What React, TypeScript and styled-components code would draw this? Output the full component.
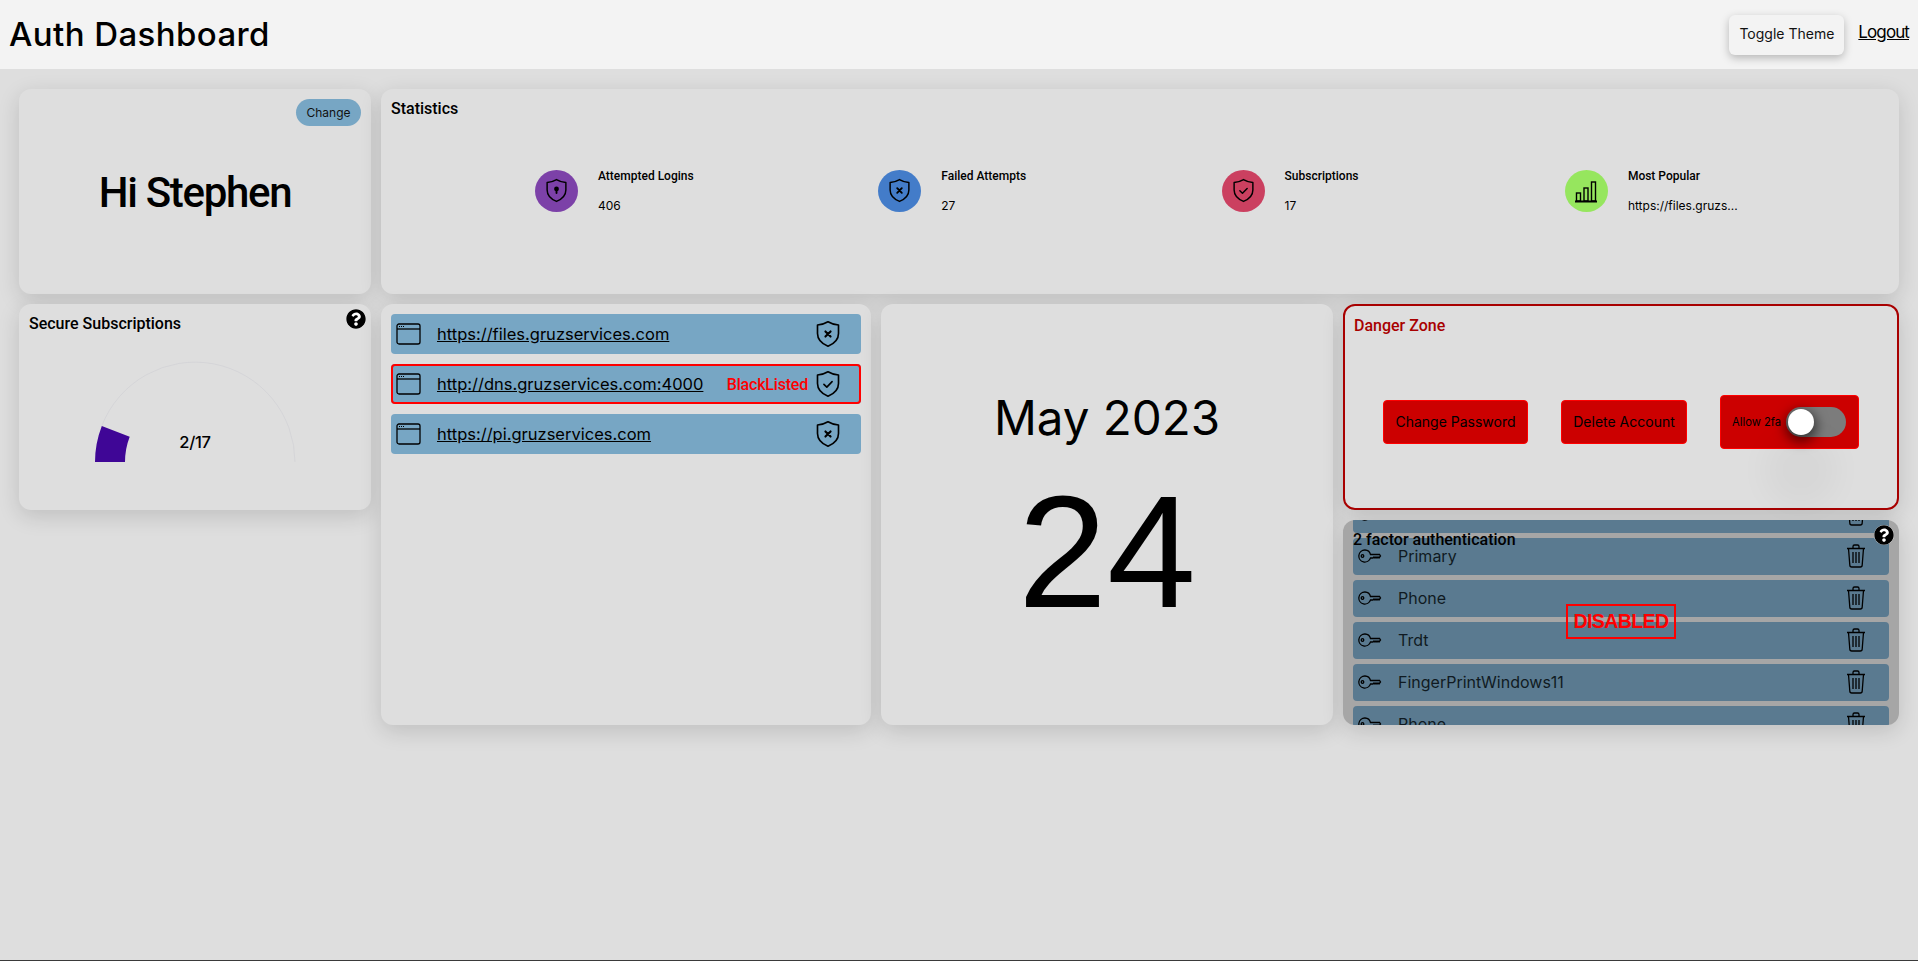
import React from "react";
import styled, { createGlobalStyle } from "styled-components";
import { FaQuestionCircle } from "react-icons/fa";

const Global = createGlobalStyle`
  html, body { margin: 0; padding: 0; background: #dedede; }
  body { font-family: "Inter", "Liberation Sans", sans-serif; color: #000; overflow: hidden; }
  #root { height: 961px; }
  * { box-sizing: border-box; }
`;

const Page = styled.div`
  width: 1918px;
  height: 961px;
  border-bottom: 1px solid #3a3a3a;
`;
const Header = styled.header`
  height: 69px;
  background: #f3f3f3;
  display: flex;
  align-items: center;
  padding: 0 9px;
`;
const Title = styled.h1`
  margin: 0 0 2px;
  flex: 1;
  font: 500 33px "Inter", sans-serif;
  letter-spacing: 0.4px;
`;
const ToggleBtn = styled.button`
  width: 115px;
  height: 40px;
  border: 0;
  border-radius: 6px;
  background: #f3f3f3;
  box-shadow: 0 3px 8px rgba(0, 0, 0, 0.25);
  font: 400 14px "Inter", sans-serif;
  color: #111;
  padding: 0 0 2px;
  margin-right: 14px;
`;
const Logout = styled.a`
  font: 400 17px "Inter", sans-serif;
  letter-spacing: -0.9px;
  color: #000;
  text-decoration: underline;
  margin-bottom: 5px;
`;
const Grid = styled.main`
  display: grid;
  grid-template-columns: 352px 490px 452px 556px;
  grid-template-rows: 205px 205.5px 205.5px;
  gap: 10px;
  padding: 20px 0 0 19px;
`;
const Card = styled.section`
  position: relative;
  background: #dedede;
  border-radius: 12px;
  box-shadow: 0 6px 22px rgba(0, 0, 0, 0.14);
  padding: 10px;
`;
const CardTitle = styled.h3<{ $color?: string }>`
  margin: 0;
  font: 500 16px/20px "Roboto", sans-serif;
  color: ${(p) => p.$color || "#000"};
`;
const WelcomeCard = styled(Card)`
  display: flex;
  align-items: center;
  justify-content: center;
`;
const Hi = styled.div`
  font: 500 42px "Roboto", sans-serif;
  letter-spacing: -1.3px;
  padding-top: 1px;
`;
const ChangeBtn = styled.button`
  position: absolute;
  top: 10px;
  right: 10px;
  width: 65px;
  height: 27px;
  border: 0;
  border-radius: 14px;
  background: #77a6c4;
  font: 400 12px "Inter", sans-serif;
  color: #111;
  padding: 0;
`;
const StatsCard = styled(Card)`
  grid-column: 2 / 5;
`;
const StatsRow = styled.div`
  display: grid;
  grid-template-columns: 343.3px 343.3px 343.3px 300px;
  margin-top: 49px;
  padding-left: 144px;
`;
const Stat = styled.div`
  display: flex;
  align-items: center;
  gap: 20px;
`;
const StatCircle = styled.div<{ $bg: string }>`
  width: 43px;
  height: 42px;
  border-radius: 50%;
  background: ${(p) => p.$bg};
  display: flex;
  align-items: center;
  justify-content: center;
`;
const StatText = styled.div`
  display: flex;
  flex-direction: column;
  gap: 16px;
  padding-top: 1px;
`;
const StatLabel = styled.div`
  font: 500 12px/14px "Roboto", sans-serif;
`;
const StatValue = styled.div`
  font: 400 12px/14px "Inter", sans-serif;
`;
const Help = styled.div`
  position: absolute;
  top: 5px;
  right: 5px;
  width: 20px;
  height: 20px;
  display: flex;
  color: #000;
  background: #fff;
  border-radius: 50%;
`;
const GaugeWrap = styled.div`
  display: flex;
  justify-content: center;
  position: relative;
  margin-top: 18px;
`;
const GaugeValue = styled.div`
  position: absolute;
  top: 80px;
  left: 0;
  right: 0;
  text-align: center;
  font: 500 16.5px/20px "Inter", sans-serif;
  letter-spacing: -0.3px;
`;
const ListCard = styled(Card)`
  grid-row: 2 / 4;
  grid-column: 2;
  display: flex;
  flex-direction: column;
  gap: 10px;
`;
const SiteRow = styled.div<{ $danger?: boolean }>`
  height: 40px;
  border-radius: 4px;
  background: #77a6c4;
  box-shadow: ${(p) => (p.$danger ? "inset 0 0 0 2px #f00" : "none")};
  padding-left: 5px;
  display: flex;
  align-items: center;
`;
const SiteLink = styled.a`
  flex: 1;
  margin-left: 15px;
  font: 400 16.5px "Inter", sans-serif;
  color: #000;
  text-decoration: underline;
`;
const BlackListed = styled.span`
  font: 500 16px "Roboto", sans-serif;
  letter-spacing: -0.2px;
  color: #f00;
  margin-right: 6px;
`;
const ShieldSlot = styled.div`
  width: 47px;
  display: flex;
`;
const DateCard = styled(Card)`
  grid-row: 2 / 4;
  grid-column: 3;
  display: flex;
  flex-direction: column;
  align-items: center;
  padding-top: 85px;
`;
const MonthYear = styled.div`
  font: 400 47.5px/58px "Inter", sans-serif;
`;
const Day = styled.div`
  font: 400 160px/180px "Liberation Sans", sans-serif;
  margin-top: 15px;
`;
const DangerCard = styled(Card)`
  grid-column: 4;
  border: 2px solid #a80000;
  padding: 10px 9px;
`;
const DangerRow = styled.div`
  display: flex;
  align-items: center;
  justify-content: center;
  gap: 33px;
  margin-top: 59px;
`;
const DangerBtn = styled.button<{ $w: number }>`
  width: ${(p) => p.$w}px;
  height: 44px;
  padding: 0 0 2px;
  border: 1px solid #f00;
  border-radius: 4px;
  background: #cc0000;
  font: 400 14px "Inter", sans-serif;
  color: #000;
`;
const AllowBox = styled.div`
  width: 139px;
  height: 54px;
  background: #cc0000;
  border: 1px solid #f00;
  border-radius: 4px;
  display: flex;
  align-items: center;
  padding-left: 11px;
  gap: 5px;
  font: 400 11.2px "Inter", sans-serif;
  white-space: nowrap;
`;
const Switch = styled.div`
  position: relative;
  width: 60px;
  height: 30px;
  border-radius: 15px;
  background: #7c7c7c;
  flex: none;
`;
const Knob = styled.div`
  position: absolute;
  left: 2px;
  top: 2px;
  width: 26px;
  height: 26px;
  border-radius: 50%;
  background: #fff;
  box-shadow: 0 4px 12px 3px rgba(0, 0, 0, 0.55), 0 48px 30px 25px rgba(0, 0, 0, 0.03);
`;
const TwoFaCard = styled(Card)`
  grid-column: 4;
  background: #a6a6a6;
  overflow: hidden;
  padding: 0 10px;
`;
const TwoFaList = styled.div`
  display: flex;
  flex-direction: column;
  gap: 5px;
  margin-top: -24px;
`;
const KeyRow = styled.div`
  flex: none;
  height: 37px;
  background: #5a7a90;
  border-radius: 4px;
  display: flex;
  align-items: center;
  padding: 0 23px 0 5px;
`;
const KeyName = styled.span`
  flex: 1;
  margin-left: 16px;
  padding-bottom: 1px;
  font: 400 16px "Inter", sans-serif;
  color: #101a22;
`;
const TwoFaTitle = styled.div`
  position: absolute;
  left: 10px;
  top: 10px;
  font: 500 16px/20px "Roboto", sans-serif;
`;
const Disabled = styled.div`
  position: absolute;
  left: 223px;
  top: 84px;
  width: 110px;
  height: 35px;
  border: 2px solid #f00;
  color: #f00;
  font: 700 19.5px/31px "Liberation Sans", sans-serif;
  letter-spacing: -0.6px;
  text-align: center;
`;

const Shield: React.FC<{ kind: "lock" | "x" | "check"; size?: number }> = ({ kind, size = 25 }) => (
  <svg width={size} height={size} viewBox="0 0 24 24" fill="none" stroke="#000" strokeWidth="1.4" strokeLinejoin="round" strokeLinecap="round">
    <path d="M12 1.5c3 1.8 6 2.6 9 2.8v7.2c0 4.8-3.6 8.7-9 11-5.4-2.3-9-6.2-9-11V4.3c3-.2 6-1 9-2.8z" />
    {kind === "lock" && (
      <>
        <circle cx="12" cy="10.5" r="1.6" fill="#000" />
        <path d="M12 10.5v4" strokeWidth="1.8" />
      </>
    )}
    {kind === "x" && <path d="M9.8 9.8l4.4 4.4m0-4.4l-4.4 4.4" strokeWidth="1.8" />}
    {kind === "check" && <path d="M8.5 12.3l2.5 2.4 4.5-4.7" />}
  </svg>
);
const Bars = () => (
  <svg width="24" height="24" viewBox="0 0 24 24" fill="none" stroke="#000" strokeWidth="1.4">
    <path d="M1 22.5h22" strokeWidth="2" />
    <rect x="2.5" y="14" width="4" height="8" />
    <rect x="10" y="9" width="4" height="13" />
    <rect x="17.5" y="3" width="4" height="19" />
  </svg>
);
const BrowserIcon = () => (
  <svg width="26" height="22" viewBox="0 0 26 22" fill="none" stroke="#000" strokeWidth="1.3">
    <rect x="1" y="1" width="23" height="20" rx="2" />
    <path d="M1 6h23" />
    <path d="M3 3.5h1M5 3.5h1M7 3.5h1" strokeWidth="1" />
  </svg>
);
const KeyIcon = () => (
  <svg width="24" height="14" viewBox="0 0 24 14" fill="none" stroke="#000" strokeWidth="1.3">
    <path d="M7 1a6 6 0 1 0 5.5 8H15l1-1 1 1 1-1 1 1 1-1 1 1 1.5-2-1-1.5H12.5A6 6 0 0 0 7 1z" />
    <circle cx="4.5" cy="7" r="1.3" />
  </svg>
);
const Trash = () => (
  <svg width="20" height="24" viewBox="0 0 20 24" fill="none" stroke="#000" strokeWidth="1.3" strokeLinejoin="round">
    <path d="M1 4.5h18M7 4.5V2.5a1.5 1.5 0 0 1 1.5-1.5h3A1.5 1.5 0 0 1 13 2.5v2" />
    <path d="M2.5 4.5l1.3 16.5a2 2 0 0 0 2 2h8.400a2 2 0 0 0 2-2l1.300-16.500" />
    <path d="M7 8v11M10 8v11M13 8v11" />
  </svg>
);

const stats = [
  { bg: "#7c41a8", icon: <Shield kind="lock" />, label: "Attempted Logins", value: "406" },
  { bg: "#437cc9", icon: <Shield kind="x" />, label: "Failed Attempts", value: "27" },
  { bg: "#cb4060", icon: <Shield kind="check" />, label: "Subscriptions", value: "17" },
  { bg: "#96e65e", icon: <Bars />, label: "Most Popular", value: "https://files.gruzs..." },
];
const sites = [
  { url: "https://files.gruzservices.com", kind: "x" as const },
  { url: "http://dns.gruzservices.com:4000", kind: "check" as const, black: true },
  { url: "https://pi.gruzservices.com", kind: "x" as const },
];
const keys = ["Phone", "Primary", "Phone", "Trdt", "FingerPrintWindows11", "Phone"];

export default function App() {
  return (
    <Page>
      <Global />
      <Header>
        <Title>Auth Dashboard</Title>
        <ToggleBtn>Toggle Theme</ToggleBtn>
        <Logout href="#">Logout</Logout>
      </Header>
      <Grid>
        <WelcomeCard>
          <Hi>Hi Stephen</Hi>
          <ChangeBtn>Change</ChangeBtn>
        </WelcomeCard>
        <StatsCard>
          <CardTitle>Statistics</CardTitle>
          <StatsRow>
            {stats.map((s) => (
              <Stat key={s.label}>
                <StatCircle $bg={s.bg}>{s.icon}</StatCircle>
                <StatText>
                  <StatLabel>{s.label}</StatLabel>
                  <StatValue>{s.value}</StatValue>
                </StatText>
              </Stat>
            ))}
          </StatsRow>
        </StatsCard>
        <Card>
          <CardTitle>Secure Subscriptions</CardTitle>
          <Help>
            <FaQuestionCircle size={20} />
          </Help>
          <GaugeWrap>
            <svg width="220" height="110" viewBox="0 0 220 110">
              <path d="M16.8 73.9A100 100 0 0 1 210 110" fill="none" stroke="#cfcfd4" strokeWidth="0.6" />
              <path d="M10 110A100 100 0 0 1 16.8 73.9L44.7 84.7A70 70 0 0 0 40 110Z" fill="#3f0696" />
            </svg>
            <GaugeValue>2/17</GaugeValue>
          </GaugeWrap>
        </Card>
        <ListCard>
          {sites.map((s) => (
            <SiteRow key={s.url} $danger={s.black}>
              <BrowserIcon />
              <SiteLink href="#">{s.url}</SiteLink>
              {s.black && <BlackListed>BlackListed</BlackListed>}
              <ShieldSlot>
                <Shield kind={s.kind} size={28} />
              </ShieldSlot>
            </SiteRow>
          ))}
        </ListCard>
        <DateCard>
          <MonthYear>May 2023</MonthYear>
          <Day>24</Day>
        </DateCard>
        <DangerCard>
          <CardTitle $color="#a80000">Danger Zone</CardTitle>
          <DangerRow>
            <DangerBtn $w={145}>Change Password</DangerBtn>
            <DangerBtn $w={126}>Delete Account</DangerBtn>
            <AllowBox>
              Allow 2fa
              <Switch>
                <Knob />
              </Switch>
            </AllowBox>
          </DangerRow>
        </DangerCard>
        <TwoFaCard>
          <TwoFaList>
            {keys.map((k, i) => (
              <KeyRow key={i}>
                <KeyIcon />
                <KeyName>{k}</KeyName>
                <Trash />
              </KeyRow>
            ))}
          </TwoFaList>
          <TwoFaTitle>2 factor authentication</TwoFaTitle>
          <Help>
            <FaQuestionCircle size={20} />
          </Help>
          <Disabled>DISABLED</Disabled>
        </TwoFaCard>
      </Grid>
    </Page>
  );
}
